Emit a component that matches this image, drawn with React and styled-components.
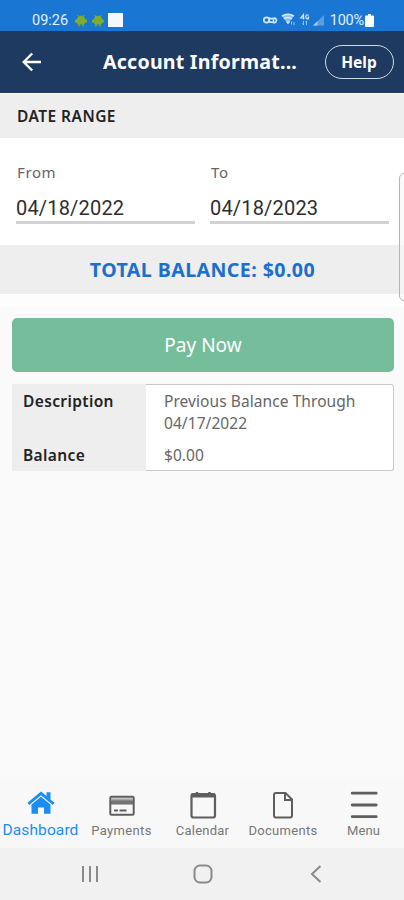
import React from 'react';
import styled, { createGlobalStyle } from 'styled-components';

const GlobalStyle = createGlobalStyle`
  * {
    box-sizing: border-box;
  }
  body {
    margin: 0;
    background: #fafafa;
    font-family: "Noto Sans", "Open Sans", sans-serif;
  }
`;

const Screen = styled.div`
  width: 404px;
  height: 900px;
  display: flex;
  flex-direction: column;
  position: relative;
  overflow: hidden;
  background: #fafafa;
`;

const StatusBar = styled.div`
  height: 31px;
  flex: none;
  padding: 9px 30px 0 32px;
  display: flex;
  align-items: center;
  justify-content: space-between;
  background: #1976d2;
  color: #e3f0ff;
  font-family: Roboto, sans-serif;
  font-size: 14.5px;
  line-height: 22px;

  svg {
    display: block;
  }
`;

const StatusGroup = styled.div`
  display: flex;
  align-items: center;
  gap: ${(props) => props.$gap}px;
`;

const Clock = styled.span`
  margin-right: 2px;
  padding-top: 1px;
`;

const Percent = styled.span`
  padding-top: 1px;
  letter-spacing: -0.2px;
`;

const WhiteSquare = styled.span`
  width: 15px;
  height: 14px;
  margin-left: -1px;
  background: #f4f9ff;
`;

const Header = styled.header`
  height: 62px;
  flex: none;
  padding: 0 10px 0 20px;
  display: flex;
  align-items: center;
  background: #1f3a60;
  color: #fff;
`;

const Title = styled.h1`
  width: 200px;
  margin: 0 22px 0 61px;
  font-size: 19.6px;
  font-weight: 700;
  line-height: 28px;
  letter-spacing: 0.22px;
  white-space: nowrap;
`;

const HelpButton = styled.button`
  width: 69px;
  height: 34px;
  flex: none;
  padding: 0 1px 0 0;
  border: 1.5px solid #d3d9e2;
  border-radius: 17px;
  background: transparent;
  color: #fff;
  font: 700 15.5px/22px "Noto Sans", sans-serif;
`;

const SectionBar = styled.div`
  height: 45px;
  flex: none;
  padding-left: 17px;
  border-top: 1px solid #f8f8f8;
  background: #eee;
  color: #222;
  font-size: 15.5px;
  font-weight: 600;
  line-height: 44px;
  letter-spacing: 0.45px;
`;

const DateRange = styled.div`
  height: 107px;
  flex: none;
  padding: 23px 15px 0 16px;
  display: grid;
  grid-template-columns: 179px 179px;
  column-gap: 15px;
  align-content: start;
  background: #fff;
`;

const FieldLabel = styled.div`
  padding-left: 1px;
  color: #666;
  font-size: 15px;
  line-height: 22px;
  letter-spacing: 0.6px;
`;

const FieldValue = styled.div`
  height: 41px;
  padding-top: 12px;
  border-bottom: 3px solid #d2d2d2;
  color: #2e2e2e;
  font-family: Roboto, sans-serif;
  font-size: 20px;
  line-height: 27px;
  letter-spacing: 0.18px;
`;

const TotalBar = styled.div`
  height: 49px;
  flex: none;
  padding-left: 1px;
  background: #eee;
  color: #1b6fd0;
  font-size: 19.6px;
  font-weight: 700;
  line-height: 50px;
  letter-spacing: 0.42px;
  text-align: center;
`;

const Content = styled.div`
  flex: 1;
  padding: 11px 10px 0 12px;
  border-top: 13px solid #fdfdfd;
`;

const PayButton = styled.button`
  display: block;
  width: 100%;
  height: 54px;
  padding: 0;
  border: 0;
  border-radius: 5px;
  background: #76bd9c;
  color: #fff;
  font: 400 19px/54px "Noto Sans", sans-serif;
`;

const Card = styled.dl`
  height: 87px;
  margin: 12px 0 0;
  display: grid;
  grid-template-columns: 134px 1fr;
  grid-template-rows: 54px 31px;
  border: 1px solid #c8c8c8;
  border-left: 0;
  border-radius: 3px;
  background: #fff;
  font-size: 15.5px;
  line-height: 21.5px;
`;

const Term = styled.dt`
  margin: -1px 0;
  padding: 7px 0 0 11px;
  background: #eee;
  color: #222;
  font-weight: 600;
  letter-spacing: 0.37px;
`;

const Detail = styled.dd`
  margin: 0;
  padding: 6px 0 0 18px;
  color: #666;
  letter-spacing: 0.07px;
`;

const TabBar = styled.nav`
  height: 69px;
  flex: none;
  display: grid;
  grid-template-columns: 81px 81px 81px 80px 81px;
  background: #f8f8f8;
`;

const Tab = styled.div`
  display: flex;
  flex-direction: column;
  align-items: center;
  padding-top: 12px;
  color: ${(props) => (props.$active ? '#1b8df5' : '#777')};
  font-family: Roboto, sans-serif;
  font-size: ${(props) => (props.$active ? 15.5 : 13)}px;
  line-height: 18px;
  letter-spacing: ${(props) => props.$spacing}px;
  white-space: nowrap;
`;

const TabIcon = styled.span`
  height: ${(props) => (props.$active ? 30 : 31)}px;
  display: flex;
  align-items: flex-start;
`;

const SystemBar = styled.div`
  height: 52px;
  flex: none;
  padding-left: 1px;
  display: grid;
  grid-template-columns: 178px 48px 1fr;
  align-items: center;
  justify-items: center;
  background: #f1f1f1;
`;

// Edge panel handle that floats over the right side of the screen
const EdgeHandle = styled.div`
  position: absolute;
  top: 173px;
  right: -6px;
  width: 11px;
  height: 128px;
  border: 1px solid #b5b5b5;
  border-radius: 5px;
  background: rgba(246, 246, 246, 0.7);
`;

const AndroidIcon = () => (
  <svg width="12" height="13" viewBox="0 0 12 13" fill="#7fab2e">
    <path d="M2.7 .8l1.4 1.500c1.100-.6 2.700-.6 3.800 0L9.300.8l.5.4-1.100 1.700c1 .7 1.500 1.500 1.600 2.300L12 6v2.500l-1.700.3-1.500 1.600v2H7.300v-1.800H4.700v1.800H3.200v-2L1.700 8.800 0 8.500V6l1.700-.8c.1-.8.6-1.600 1.600-2.300L2.200 1.200z" />
  </svg>
);

const StatusIcons = () => (
  <svg width="64" height="14" viewBox="0 0 64 14" fill="none" stroke="#d5e8fb">
    <circle cx="3.5" cy="7" r="2.7" strokeWidth="1.8" />
    <path d="M5.5 4.8L7 5.6h3a2.200 2.200 0 1 1 0 3.600H7.200L5.500 8.500" strokeWidth="1.7" />
    <path d="M10.5 6v3" strokeWidth="1.5" />
    <path d="M18.500 2.800C22.500 .2 27.500 .2 31.200 2.800L25 10.500z" fill="#8fbdea" stroke="none" />
    <path d="M19 3.200c3.700-2.500 8.300-2.500 12 0M21 5.800c2.500-1.700 5.500-1.700 8 0" strokeWidth="1.4" />
    <path d="M23.500 8.200L25 10l1.500-1.800" strokeWidth="1.5" />
    <path d="M28.500 8.500v3M31 9v3" strokeWidth="1" opacity=".7" />
    <path d="M40.500 6.500v-5L37.800 5H41.500M45.500 2.500C44 1 42.800 2 42.800 3.800s1.500 2.900 2.700 1.700V4.200h-1" strokeWidth="1.2" />
    <path d="M40.500 8v4M43.500 8v4M39.500 10.500l1 1.300M42.500 9.300l1-1.300" strokeWidth="1" opacity=".65" />
    <path d="M50 12.500L61 2v10.500z" fill="#5c9de0" stroke="none" />
    <path d="M50 12.500L54.500 8.200v4.300z" fill="#a9cdf1" stroke="none" />
  </svg>
);

const BatteryIcon = () => (
  <svg width="9" height="13" viewBox="0 0 9 13" fill="#fff">
    <path d="M3 0h3v1.500h2a1 1 0 0 1 1 1V12a1 1 0 0 1-1 1H1a1 1 0 0 1-1-1V2.500a1 1 0 0 1 1-1h2z" />
  </svg>
);

const BackArrow = () => (
  <svg width="22" height="20" viewBox="0 0 22 20" fill="none" stroke="#fff" strokeWidth="2.4">
    <path d="M21 10H3.500M12.200 1.500L3.700 10l8.500 8.500" />
  </svg>
);

const HomeIcon = () => (
  <svg width="28" height="25" viewBox="0 0 28 25" fill="#1b8df5">
    <path d="M14 .5l5.500 4.500V1.200h4v7.200l4 3.300-1.700 2.200L14 4.300 2.200 13.900.5 11.700z" />
    <path d="M14 5.700l9.500 7.800v9.300h-6.500v-6.300h-6v6.300H4.500v-9.300z" />
  </svg>
);

const CardIcon = () => (
  <svg width="26" height="26" viewBox="0 0 26 26" fill="none" stroke="#5e5e5e">
    <rect x="1.300" y="5.800" width="23.400" height="18" rx="1.200" strokeWidth="2" />
    <path d="M2 11.300h22" strokeWidth="4.5" stroke="#747474" />
    <path d="M2 8.300h22" strokeWidth="2" stroke="#aaa" />
    <path d="M5 19.500h4M10.500 19.500h7" strokeWidth="2" />
  </svg>
);

const CalendarIcon = () => (
  <svg width="28" height="28" viewBox="0 0 28 28" fill="none" stroke="#5e5e5e">
    <rect x="2.500" y="3" width="23.500" height="23.500" rx="2" strokeWidth="2.2" />
    <path d="M2.500 4.500H26" strokeWidth="4" />
    <path d="M8 4V1M20.500 4V1" strokeWidth="2.5" />
  </svg>
);

const DocumentIcon = () => (
  <svg width="22" height="28" viewBox="0 0 22 28" fill="none" stroke="#5e5e5e" strokeWidth="2">
    <path d="M4 2h9.500L20 8.500V24.500a2 2 0 0 1-2 2H4a2 2 0 0 1-2-2V4a2 2 0 0 1 2-2z" />
    <path d="M13 2v7h7" />
  </svg>
);

const MenuIcon = () => (
  <svg width="28" height="28" viewBox="0 0 28 28" fill="none" stroke="#5e5e5e" strokeWidth="2.8" strokeLinecap="round">
    <path d="M2.200 2.200h24M2.200 14h24M2.200 25.700h24" />
  </svg>
);

const TABS = [
  { label: 'Dashboard', icon: HomeIcon, active: true, spacing: 0.1 },
  { label: 'Payments', icon: CardIcon, spacing: 0.35 },
  { label: 'Calendar', icon: CalendarIcon, spacing: 0.22 },
  { label: 'Documents', icon: DocumentIcon, spacing: 0.3 },
  { label: 'Menu', icon: MenuIcon, spacing: 0.1 },
];

const App = () => (
  <>
    <GlobalStyle />
    <Screen>
      <StatusBar>
        <StatusGroup $gap={5}>
          <Clock>09:26</Clock>
          <AndroidIcon />
          <AndroidIcon />
          <WhiteSquare />
        </StatusGroup>
        <StatusGroup $gap={3}>
          <StatusIcons />
          <StatusGroup $gap={1}>
            <Percent>100%</Percent>
            <BatteryIcon />
          </StatusGroup>
        </StatusGroup>
      </StatusBar>

      <Header>
        <BackArrow />
        <Title>Account Informat...</Title>
        <HelpButton>Help</HelpButton>
      </Header>

      <SectionBar>DATE RANGE</SectionBar>
      <DateRange>
        <div>
          <FieldLabel>From</FieldLabel>
          <FieldValue>04/18/2022</FieldValue>
        </div>
        <div>
          <FieldLabel>To</FieldLabel>
          <FieldValue>04/18/2023</FieldValue>
        </div>
      </DateRange>
      <TotalBar>TOTAL BALANCE: $0.00</TotalBar>

      <Content>
        <PayButton>Pay Now</PayButton>
        <Card>
          <Term>Description</Term>
          <Detail>
            Previous Balance Through
            <br />
            04/17/2022
          </Detail>
          <Term>Balance</Term>
          <Detail>$0.00</Detail>
        </Card>
      </Content>

      <TabBar>
        {TABS.map(({ label, icon: Icon, active, spacing }) => (
          <Tab key={label} $active={active} $spacing={spacing}>
            <TabIcon $active={active}>
              <Icon />
            </TabIcon>
            {label}
          </Tab>
        ))}
      </TabBar>

      <SystemBar>
        <svg width="18" height="18" viewBox="0 0 18 18" stroke="#8a8a8a" strokeWidth="2">
          <path d="M2 1v16M9 1v16M16 1v16" />
        </svg>
        <svg width="20" height="20" viewBox="0 0 20 20" fill="none" stroke="#8a8a8a" strokeWidth="2">
          <rect x="1.500" y="1.500" width="17" height="17" rx="5.500" />
        </svg>
        <svg width="12" height="18" viewBox="0 0 12 18" fill="none" stroke="#8a8a8a" strokeWidth="2">
          <path d="M10.500 1L2 9l8.500 8" />
        </svg>
      </SystemBar>
      <EdgeHandle />
    </Screen>
  </>
);

export default App;
